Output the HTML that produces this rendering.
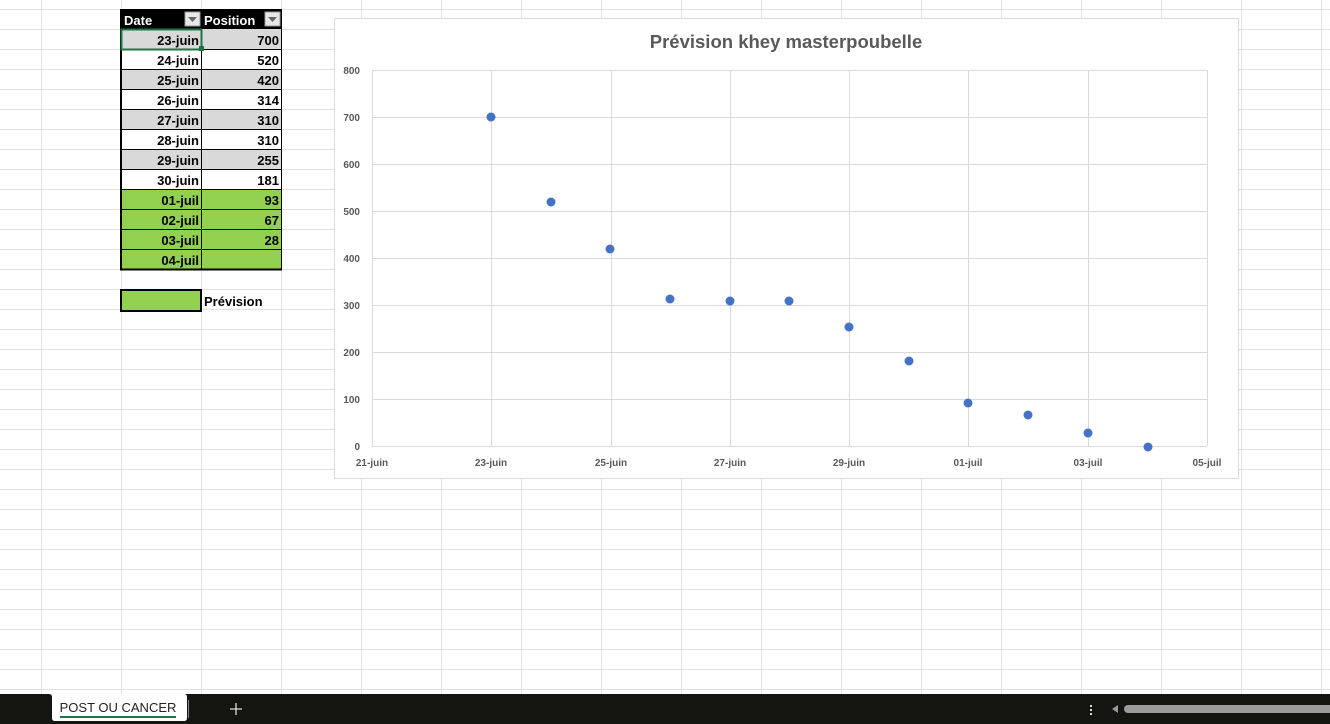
<!DOCTYPE html>
<html><head><meta charset="utf-8"><style>
body{margin:0;width:1330px;height:724px;overflow:hidden;background:#fff;font-family:"Liberation Sans",sans-serif}
svg{display:block}
</style></head><body>
<svg width="1330" height="724" viewBox="0 0 1330 724" xmlns="http://www.w3.org/2000/svg" font-family="Liberation Sans, sans-serif">
<g stroke="#e1e1e1" stroke-width="1">
<path d="M41.5 0V694M121.5 0V694M201.5 0V694M281.5 0V694M361.5 0V694M441.5 0V694M521.5 0V694M601.5 0V694M681.5 0V694M761.5 0V694M841.5 0V694M921.5 0V694M1001.5 0V694M1081.5 0V694M1161.5 0V694M1241.5 0V694M1321.5 0V694"/>
<path d="M0 9.5H1330M0 29.5H1330M0 49.5H1330M0 69.5H1330M0 89.5H1330M0 109.5H1330M0 129.5H1330M0 149.5H1330M0 169.5H1330M0 189.5H1330M0 209.5H1330M0 229.5H1330M0 249.5H1330M0 269.5H1330M0 289.5H1330M0 309.5H1330M0 329.5H1330M0 349.5H1330M0 369.5H1330M0 389.5H1330M0 409.5H1330M0 429.5H1330M0 449.5H1330M0 469.5H1330M0 489.5H1330M0 509.5H1330M0 529.5H1330M0 549.5H1330M0 569.5H1330M0 589.5H1330M0 609.5H1330M0 629.5H1330M0 649.5H1330M0 669.5H1330M0 689.5H1330"/>
</g>
<rect x="121" y="9" width="161" height="20" fill="#000"/>
<g fill="#d9d9d9"><rect x="121" y="29" width="160" height="20"/><rect x="121" y="69" width="160" height="20"/><rect x="121" y="109" width="160" height="20"/><rect x="121" y="149" width="160" height="20"/></g>
<rect x="121" y="189" width="160" height="80" fill="#92d050"/>
<g stroke="#000" stroke-width="1" fill="none">
<path d="M121.5 29V269M201.5 29V269M281.5 9V270M121 49.5H282M121 69.5H282M121 89.5H282M121 109.5H282M121 129.5H282M121 149.5H282M121 169.5H282M121 189.5H282M121 209.5H282M121 229.5H282M121 249.5H282"/>
<path d="M120 269.5H282" stroke-width="2"/>
<path d="M121 9V270" stroke-width="2"/>
</g>
<rect x="121.5" y="29.5" width="80" height="20" fill="none" stroke="#217346" stroke-width="2"/>
<rect x="199" y="46" width="5" height="5" fill="#217346"/>
<rect x="185" y="12" width="15" height="14" fill="#e8e8e8" stroke="#999"/><path d="M188 17h9l-4.5 5z" fill="#666"/>
<rect x="265" y="12" width="15" height="14" fill="#e8e8e8" stroke="#999"/><path d="M268 17h9l-4.5 5z" fill="#666"/>
<g font-size="13" font-weight="bold">
<text x="124" y="25" fill="#fff">Date</text><text x="204" y="25" fill="#fff">Position</text>
<g text-anchor="end" fill="#000">
<text x="199" y="45">23-juin</text><text x="279" y="45">700</text>
<text x="199" y="65">24-juin</text><text x="279" y="65">520</text>
<text x="199" y="85">25-juin</text><text x="279" y="85">420</text>
<text x="199" y="105">26-juin</text><text x="279" y="105">314</text>
<text x="199" y="125">27-juin</text><text x="279" y="125">310</text>
<text x="199" y="145">28-juin</text><text x="279" y="145">310</text>
<text x="199" y="165">29-juin</text><text x="279" y="165">255</text>
<text x="199" y="185">30-juin</text><text x="279" y="185">181</text>
<text x="199" y="205">01-juil</text><text x="279" y="205">93</text>
<text x="199" y="225">02-juil</text><text x="279" y="225">67</text>
<text x="199" y="245">03-juil</text><text x="279" y="245">28</text>
<text x="199" y="265">04-juil</text>
</g>
<text x="204" y="306" fill="#000">Prévision</text>
</g>
<rect x="121" y="290" width="80" height="21" fill="#92d050" stroke="#000" stroke-width="2"/>
<rect x="334.5" y="18.5" width="904" height="460" fill="#fff" stroke="#d9d9d9"/>
<text x="786" y="48" text-anchor="middle" font-size="18.5" font-weight="bold" fill="#595959">Prévision khey masterpoubelle</text>
<g stroke="#d9d9d9" stroke-width="1">
<path d="M372 70.5H1207M372 117.5H1207M372 164.5H1207M372 211.5H1207M372 258.5H1207M372 305.5H1207M372 352.5H1207M372 399.5H1207M372 446.5H1207"/>
<path d="M372.5 70V446M491.5 70V446M611.5 70V446M730.5 70V446M849.5 70V446M968.5 70V446M1088.5 70V446M1207.5 70V446"/>
</g>
<g font-size="10" font-weight="bold" fill="#595959" text-anchor="end">
<text x="360" y="74">800</text><text x="360" y="121">700</text><text x="360" y="168">600</text><text x="360" y="215">500</text><text x="360" y="262">400</text><text x="360" y="309">300</text><text x="360" y="356">200</text><text x="360" y="403">100</text><text x="360" y="450">0</text>
</g>
<g font-size="10" font-weight="bold" fill="#595959" text-anchor="middle">
<text x="372" y="466">21-juin</text><text x="491" y="466">23-juin</text><text x="611" y="466">25-juin</text><text x="730" y="466">27-juin</text><text x="849" y="466">29-juin</text><text x="968" y="466">01-juil</text><text x="1088" y="466">03-juil</text><text x="1207" y="466">05-juil</text>
</g>
<g fill="#4472c4">
<circle cx="491" cy="117" r="4.5"/><circle cx="551" cy="202" r="4.5"/><circle cx="610" cy="249" r="4.5"/><circle cx="670" cy="299" r="4.5"/><circle cx="730" cy="301" r="4.5"/><circle cx="789" cy="301" r="4.5"/><circle cx="849" cy="327" r="4.5"/><circle cx="909" cy="361" r="4.5"/><circle cx="968" cy="403" r="4.5"/><circle cx="1028" cy="415" r="4.5"/><circle cx="1088" cy="433" r="4.5"/><circle cx="1148" cy="447" r="4.5"/>
</g>
<rect x="0" y="694" width="1330" height="30" fill="#141411"/>
<path d="M52 694H184q3 0 3 3V718q0 3-3 3H55q-3 0-3-3V697q0-3-3-3z" fill="#fff"/>
<text x="118" y="712" text-anchor="middle" font-size="13" fill="#222">POST OU CANCER</text>
<rect x="60" y="716" width="116" height="2" fill="#217346"/>
<path d="M188.5 700V718" stroke="#888"/>
<path d="M236 703V715M230 709H242" stroke="#ddd" stroke-width="1.3"/>
<g fill="#ddd"><rect x="1090" y="705" width="2" height="2"/><rect x="1090" y="709" width="2" height="2"/><rect x="1090" y="713" width="2" height="2"/></g>
<path d="M1118 705V713L1112 709Z" fill="#999"/>
<rect x="1124" y="705" width="210" height="8" rx="4" fill="#9b9b9b"/>
</svg>
</body></html>
